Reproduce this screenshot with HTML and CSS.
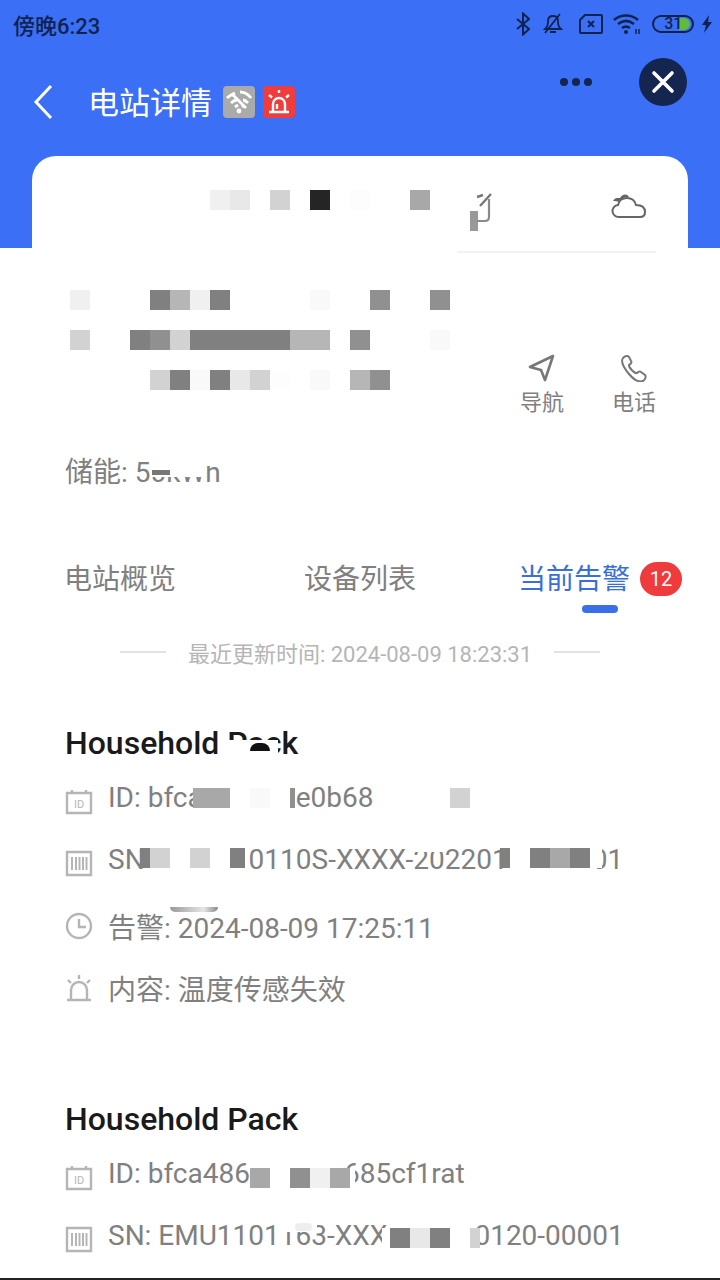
FILE: index.html
```html
<!DOCTYPE html>
<html lang="zh-CN">
<head>
    <meta charset="UTF-8">
    <meta name="viewport" content="width=device-width, initial-scale=1.0">
    <title>电站详情</title>
    <link rel="stylesheet" href="styles.css">
</head>
<body>
    <header class="top">
        <div class="status">
            <span class="clock">傍晚6:23</span>
            <svg class="st-bt" width="14" height="24" viewBox="0 0 14 24"><path d="M1 7l12 10-6 5.500V1.500l6 5.500L1 17" fill="none" stroke="#10234f" stroke-width="2"/></svg>
            <svg class="st-bell" width="22" height="24" viewBox="0 0 22 24"><path d="M3 17c2-2 3-3 3-8 0-3 2-5 5-5s5 2 5 5c0 5 1 6 3 8zM8 20h6M3 21L18 2" fill="none" stroke="#10234f" stroke-width="1.800"/></svg>
            <svg class="st-sim" width="24" height="20" viewBox="0 0 24 20"><path d="M6 1h16a1 1 0 0 1 1 1v16a1 1 0 0 1-1 1H2a1 1 0 0 1-1-1V6zM9 7l6 6M15 7l-6 6" fill="none" stroke="#10234f" stroke-width="2"/></svg>
            <svg class="st-wifi" width="28" height="22" viewBox="0 0 28 22"><path d="M1 7c7-6 17-6 24 0M5 11c5-4 11-4 16 0M9 15c3-2 5-2 8 0" fill="none" stroke="#10234f" stroke-width="2.600"/><circle cx="13" cy="19" r="2" fill="#10234f"/><path d="M23 16v5M26 16v5" stroke="#10234f" stroke-width="1.500"/></svg>
            <div class="batt"><span class="batt-num">31</span><i class="batt-fill"></i></div>
            <svg class="st-bolt" width="12" height="18" viewBox="0 0 12 18"><path d="M8 0L1 10h4l-2 8 8-11H7z" fill="#10234f"/></svg>
        </div>
        <div class="nav">
            <svg class="back" width="20" height="36" viewBox="0 0 20 36"><path d="M18 2L3 18l15 16" fill="none" stroke="#fff" stroke-width="3"/></svg>
            <h1>电站详情</h1>
            <span class="tag tag-gray">
                <svg width="32" height="32" viewBox="0 0 32 32"><path d="M4 12c3-3 6-4 8-5M17 6c4 0 8 2 11 6M8 17c2-2 3-3 6-3M20 14c2 0 3 1 5 3M12 21l3-2M19 19l2 2M9 8l14 14" fill="none" stroke="#fff" stroke-width="2.800"/><circle cx="16" cy="25" r="2.400" fill="#fff"/></svg>
            </span>
            <span class="tag tag-red">
                <svg width="32" height="32" viewBox="0 0 32 32"><path d="M10 25v-7a6 6 0 0 1 12 0v7M6 26h20M16 4v3M6 9l3 2.500M26 9l-3 2.500M14 23v-5" fill="none" stroke="#fff" stroke-width="2.400"/></svg>
            </span>
            <div class="dots"><i></i><i></i><i></i></div>
            <div class="close">
                <svg width="24" height="24" viewBox="0 0 24 24"><path d="M3 3l18 18M21 3L3 21" stroke="#fff" stroke-width="3.600" stroke-linecap="round"/></svg>
            </div>
        </div>
    </header>

    <section class="card">
        <div class="card-main">
            <div class="mosaic">
                <div class="cells first">
                    <i class="sp7"></i><i class="g8"></i><i class="g7"></i><i class="sp1"></i><i class="g6"></i><i class="sp1"></i><i class="g1"></i><i class="sp1"></i><i class="g0"></i><i class="sp2"></i><i class="g4"></i>
                </div>
                <div class="cells second">
                    <i class="g8"></i><i class="sp3"></i><i class="g2"></i><i class="g5"></i><i class="g8"></i><i class="g2"></i><i class="sp4"></i><i class="g9"></i><i class="sp2"></i><i class="g3"></i><i class="sp2"></i><i class="g3"></i>
                </div>
                <div class="cells">
                    <i class="g6"></i><i class="sp2"></i><i class="g2"></i><i class="g3"></i><i class="g6"></i><i class="g2"></i><i class="g2"></i><i class="g2"></i><i class="g2"></i><i class="g2"></i><i class="g5"></i><i class="g5"></i><i class="sp1"></i><i class="g3"></i><i class="sp3"></i><i class="g9"></i>
                </div>
                <div class="cells">
                    <i class="sp4"></i><i class="g6"></i><i class="g2"></i><i class="g9"></i><i class="g2"></i><i class="g7"></i><i class="g6"></i><i class="g0"></i><i class="sp1"></i><i class="g9"></i><i class="sp1"></i><i class="g5"></i><i class="g3"></i>
                </div>
            </div>
            <div class="side">
                <div class="weather">
                    <svg width="24" height="38" viewBox="0 0 24 38"><path d="M1 18h8v20H1z" fill="#999"/><path d="M8 28h8q4 0 4-4V6" fill="none" stroke="#8a8a8a" stroke-width="2.200"/><path d="M8 4l6-2M11 13L22 1" fill="none" stroke="#777" stroke-width="2.400"/></svg>
                    <svg width="36" height="26" viewBox="0 0 36 26"><path d="M8 24a6 6 0 0 1-1-12c1-5 5-7 9-7 5 0 8 3 9 7 5 0 9 2 9 7 0 3-2 5-5 5z" fill="none" stroke="#666" stroke-width="2"/><path d="M2 8c2-4 5-3 7-3 2-4 7-5 9-1-5 0-8 2-10 5-2-1-4-1-6-1z" fill="#666"/></svg>
                </div>
                <div class="actions">
                    <div class="action">
                        <svg width="28" height="28" viewBox="0 0 28 28"><path d="M25 2L2 13l11 3 4 10z" fill="none" stroke="#777" stroke-width="2.600" stroke-linejoin="round"/></svg>
                        <span>导航</span>
                    </div>
                    <div class="action">
                        <svg width="28" height="28" viewBox="0 0 28 28"><path d="M3 4c2-2 5-3 6-1l2 4c1 1 0 3-2 4-1 1 5 9 8 8 1-1 3-2 4-1l4 3c1 1 1 4-2 6-5 2-9-1-14-7C4 14 0 8 3 4z" fill="none" stroke="#777" stroke-width="2"/></svg>
                        <span>电话</span>
                    </div>
                </div>
            </div>
        </div>
        <p class="storage">储能: 50kWh<i class="storage-veil"></i><i class="storage-blot"></i></p>
    </section>

    <nav class="tabs">
        <a>电站概览</a>
        <a>设备列表</a>
        <a class="active">当前告警<b>12</b></a>
    </nav>

    <div class="updated"><i></i><span>最近更新时间: 2024-08-09 18:23:31</span><i></i></div>

    <main class="list">
        <article class="item">
            <h2>Household Pack<i class="title-veil"></i><i class="title-blot"></i></h2>
            <div class="row">
                <svg class="ico ico-low" width="28" height="28" viewBox="0 0 28 28"><path d="M2 6h24v20H2zM7 3v4M21 3v4" fill="none" stroke="#b5b5b5" stroke-width="2.400"/><text x="14" y="21" text-anchor="middle" class="ic-text">ID</text></svg>
                <span>ID: bfca</span><i class="gap-a"></i><span>e0b68</span>
                <div class="cells veil veil-a">
                    <i class="sp9"></i><i class="g4 right17"></i><i class="g4"></i><i class="sp1"></i><i class="g9"></i><i class="sp1"></i><i class="g3 left5"></i><i class="sp7"></i><i class="g6"></i>
                </div>
            </div>
            <div class="row">
                <svg class="ico ico-low" width="28" height="28" viewBox="0 0 28 28"><use href="#ic-bar"/></svg>
                <span>SN</span><i class="gap-b"></i><span>0110S-XXXX-202201</span><i class="gap-c"></i><span>01</span>
                <i class="strip strip-sn"></i>
                <div class="cells veil veil-b">
                    <i class="sp6"></i><i class="g2 right10"></i><i class="g6"></i><i class="sp1"></i><i class="g6"></i><i class="sp1"></i><i class="g2 left15"></i><i class="sp12"></i><i class="g2 right10"></i><i class="sp1"></i><i class="g2"></i><i class="g4"></i><i class="g2"></i><i class="white left12"></i>
                </div>
            </div>
            <div class="row row-time">
                <svg class="ico" width="28" height="28" viewBox="0 0 28 28"><use href="#ic-clock"/></svg>
                <span>告警: 2024-08-09 17:25:11</span>
                <i class="smudge"></i>
            </div>
            <div class="row">
                <svg class="ico" width="28" height="28" viewBox="0 0 28 28"><use href="#ic-alarm"/></svg>
                <span>内容: 温度传感失效</span>
            </div>
        </article>
        <article class="item">
            <h2>Household Pack</h2>
            <div class="row">
                <svg class="ico ico-low" width="28" height="28" viewBox="0 0 28 28"><path d="M2 6h24v20H2zM7 3v4M21 3v4" fill="none" stroke="#b5b5b5" stroke-width="2.400"/><text x="14" y="21" text-anchor="middle" class="ic-text">ID</text></svg>
                <span>ID: bfca486</span><i class="gap-d"></i><span>685cf1rat</span>
                <div class="cells veil veil-c">
                    <i class="sp12"></i><i class="g4"></i><i class="sp1"></i><i class="g3"></i><i class="g8"></i><i class="g4"></i><i class="white left5"></i>
                </div>
            </div>
            <div class="row">
                <svg class="ico ico-low" width="28" height="28" viewBox="0 0 28 28"><use href="#ic-bar"/></svg>
                <span>SN: EMU1101163-XXX</span><i class="gap-e"></i><span>0120-00001</span>
                <i class="strip strip-emu"></i>
                <div class="cells veil veil-d">
                    <i class="sp18"></i><i class="white right8"></i><i class="g2"></i><i class="g7"></i><i class="g2"></i><i class="sp1"></i><i class="g6 left10"></i>
                </div>
            </div>
        </article>
    </main>
    <div class="edge"></div>

    <svg class="defs" width="0" height="0">
        <symbol id="ic-bar" viewBox="0 0 28 28">
            <path d="M2 3h24v23H2z" fill="none" stroke="#b5b5b5" stroke-width="2.400"/>
            <path d="M7 8v13M11 8v13M14.500 8v13M18 8v13M21.500 8v13" stroke="#b5b5b5" stroke-width="2"/>
        </symbol>
        <symbol id="ic-clock" viewBox="0 0 28 28">
            <circle cx="14" cy="14" r="12" fill="none" stroke="#b5b5b5" stroke-width="2.400"/>
            <path d="M14 7v8h7" fill="none" stroke="#b5b5b5" stroke-width="2.400"/>
        </symbol>
        <symbol id="ic-alarm" viewBox="0 0 28 28">
            <path d="M6 25v-9a8 8 0 0 1 16 0v9M2 26h24" fill="none" stroke="#b5b5b5" stroke-width="2.400"/>
            <path d="M14 1v4M3 6l3 3M25 6l-3 3" stroke="#b5b5b5" stroke-width="2.400"/>
        </symbol>
    </svg>
</body>
</html>
```

FILE: styles.css
```css
body {
    margin: 0;
    width: 720px;
    height: 1280px;
    overflow: hidden;
    display: flex;
    flex-direction: column;
    background: #fff;
    color: #808080;
    font-family: Roboto, "Noto Sans CJK SC", sans-serif;
}
i {
    display: block;
}
.top {
    height: 248px;
    flex: none;
    background: #3b6ff5;
}
.status {
    height: 48px;
    padding-left: 13px;
    display: flex;
    align-items: center;
    color: #10234f;
}
.clock {
    font-size: 22px;
    font-weight: 500;
    margin-right: 416px;
}
.st-bell { margin-left: 12px; }
.st-sim { margin-left: 15px; }
.st-wifi { margin-left: 10px; }
.batt {
    position: relative;
    width: 42px;
    height: 18px;
    margin-left: 11px;
    box-sizing: border-box;
    border: 2px solid #10234f;
    border-radius: 9px;
    text-align: center;
    font-size: 16px;
    line-height: 14px;
    font-weight: 500;
}
.batt-num {
    position: relative;
    z-index: 1;
}
.batt-fill {
    position: absolute;
    left: 25px;
    top: 1px;
    width: 11px;
    height: 12px;
    background: #5dbb3f;
    border-radius: 0 6px 6px 0;
}
.st-bolt { margin-left: 7px; }
.nav {
    height: 68px;
    padding-left: 33px;
    display: flex;
    align-items: flex-start;
}
.back {
    margin-top: 36px;
}
.nav h1 {
    margin: 36px 11px 0 35px;
    font-size: 31px;
    line-height: 40px;
    font-weight: 400;
    color: #fff;
}
.tag {
    width: 32px;
    height: 32px;
    border-radius: 4px;
    margin: 38px 8px 0 0;
}
.tag svg {
    display: block;
}
.tag-gray { background: #aaa; }
.tag-red { background: #ef3c3c; }
.dots {
    display: flex;
    gap: 4px;
    margin: 30px 0 0 257px;
}
.dots i {
    width: 8px;
    height: 8px;
    border-radius: 50%;
    background: #14254f;
}
.close {
    width: 48px;
    height: 48px;
    margin: 10px 0 0 47px;
    border-radius: 50%;
    background: #14254f;
    display: flex;
    align-items: center;
    justify-content: center;
}
.card {
    margin: -92px 32px 0;
    height: 362px;
    flex: none;
    background: #fff;
    border-radius: 24px 24px 0 0;
    position: relative;
}
.card-main {
    display: flex;
    padding: 34px 0 0 38px;
}
.mosaic {
    width: 380px;
}
.cells {
    display: grid;
    grid-template-columns: repeat(35, 20px);
    grid-auto-rows: 20px;
}
.cells.first { margin-bottom: 80px; }
.cells.second { margin-bottom: 20px; }
.mosaic .cells + .cells + .cells { margin-bottom: 20px; }
.g0 { background: #fdfdfd; }
.g1 { background: #252525; }
.g2 { background: #808080; }
.g3 { background: #909090; }
.g4 { background: #a8a8a8; }
.g5 { background: #b6b6b6; }
.g6 { background: #d2d2d2; }
.g7 { background: #e8e8e8; }
.g8 { background: #f0f0f0; }
.g9 { background: #f9f9f9; }
.white { background: #fff; }
.sp1 { grid-column: span 1; }
.sp2 { grid-column: span 2; }
.sp3 { grid-column: span 3; }
.sp4 { grid-column: span 4; }
.sp6 { grid-column: span 6; }
.sp7 { grid-column: span 7; }
.sp9 { grid-column: span 9; }
.sp12 { grid-column: span 12; }
.sp18 { grid-column: span 18; }
.left5 { width: 5px; }
.left10 { width: 10px; }
.left12 { width: 12px; }
.left15 { width: 15px; }
.right8 { width: 8px; justify-self: end; }
.right10 { width: 10px; justify-self: end; }
.right17 { width: 17px; justify-self: end; }
.side {
    width: 199px;
    margin-left: 7px;
}
.weather {
    height: 58px;
    padding: 0 9px 0 12px;
    display: flex;
    justify-content: space-between;
    align-items: flex-start;
    border-bottom: 2px solid #f2f2f2;
    margin-top: 3px;
}
.actions {
    display: flex;
    justify-content: flex-end;
    gap: 48px;
    margin-top: 101px;
}
.action {
    display: flex;
    flex-direction: column;
    align-items: center;
    gap: 6px;
    font-size: 22px;
    line-height: 30px;
    color: #808080;
}
.storage {
    position: absolute;
    left: 33px;
    top: 299px;
    margin: 0;
    font-size: 28px;
    line-height: 36px;
}
.storage-veil {
    position: absolute;
    left: 85px;
    top: 2px;
    width: 56px;
    height: 20px;
    background: #fff;
}
.storage-veil::after {
    content: "";
    position: absolute;
    left: 56px;
    top: 0;
    width: 18px;
    height: 9px;
    background: #fff;
}
.storage-blot {
    position: absolute;
    left: 87px;
    top: 15px;
    width: 18px;
    height: 5px;
    background: #777;
}
.tabs {
    height: 64px;
    flex: none;
    position: relative;
    display: flex;
    align-items: center;
    padding-left: 64px;
    font-size: 28px;
    margin-top: 27px;
}
.tabs a:nth-child(2) { margin-left: 128px; }
.tabs a.active {
    margin-left: 102px;
    color: #3a6fd8;
    display: flex;
    align-items: center;
    position: relative;
}
.tabs b {
    width: 42px;
    height: 34px;
    margin: 3px 0 0 10px;
    border-radius: 17px;
    background: #ef3b3b;
    color: #fff;
    font-size: 20px;
    font-weight: 400;
    line-height: 34px;
    text-align: center;
}
.tabs a.active::after {
    content: "";
    position: absolute;
    left: 64px;
    top: 48px;
    width: 36px;
    height: 8px;
    border-radius: 4px;
    background: #3b6fe8;
}
.updated {
    flex: none;
    height: 40px;
    margin-top: 23px;
    display: flex;
    align-items: center;
    justify-content: center;
    gap: 22px;
    font-size: 22px;
    color: #b5b5b5;
}
.updated i {
    width: 46px;
    height: 2px;
    background: #e2e2e2;
}
.list {
    flex: 1;
    overflow: hidden;
    margin-top: 51px;
}
.item {
    height: 376px;
}
.item h2 {
    position: relative;
    margin: 0;
    padding-left: 65px;
    height: 40px;
    font-size: 32px;
    font-weight: 500;
    line-height: 40px;
    color: #1a1a1a;
}
.title-veil {
    position: absolute;
    left: 219px;
    top: 17px;
    width: 59px;
    height: 20px;
    background: #fff;
}
.title-blot {
    position: absolute;
    left: 250px;
    top: 20px;
    width: 20px;
    height: 8px;
    border-radius: 8px 8px 0 0;
    background: #111;
}
.row {
    position: relative;
    height: 62px;
    padding-left: 65px;
    display: flex;
    align-items: center;
    font-size: 28px;
    white-space: nowrap;
}
.item h2 + .row { margin-top: 3px; }
.row-time { margin-top: 5px; }
.ico {
    flex: none;
    margin-right: 15px;
}
.ico-low {
    position: relative;
    top: 4px;
}
.ic-text {
    font-size: 11px;
    fill: #b5b5b5;
}
.gap-a { width: 93px; }
.gap-b { width: 104px; }
.gap-c { width: 84px; }
.gap-d { width: 94px; }
.gap-e { width: 87px; }
.veil {
    position: absolute;
    left: 10px;
}
.veil-a { top: 22px; }
.veil-b { top: 20px; }
.veil-c { top: 26px; }
.veil-d { top: 24px; }
.smudge {
    position: absolute;
    left: 170px;
    top: 12px;
    width: 48px;
    height: 5px;
    border-radius: 0 0 20px 20px;
    background: linear-gradient(90deg, #999, #e5e5e5 70%, #888);
}
.strip {
    position: absolute;
    background: #fff;
}
.strip-sn {
    left: 410px;
    top: 18px;
    width: 36px;
    height: 6px;
}
.strip-emu {
    left: 281px;
    top: 11px;
    width: 36px;
    height: 17px;
}
.strip-emu::after {
    content: "";
    position: absolute;
    left: 14px;
    top: 8px;
    width: 17px;
    height: 8px;
    border-radius: 4px;
    background: #eee;
}
.edge {
    position: absolute;
    left: 0;
    top: 1278px;
    width: 720px;
    height: 2px;
    background: #222;
}
.defs {
    position: absolute;
}
```
